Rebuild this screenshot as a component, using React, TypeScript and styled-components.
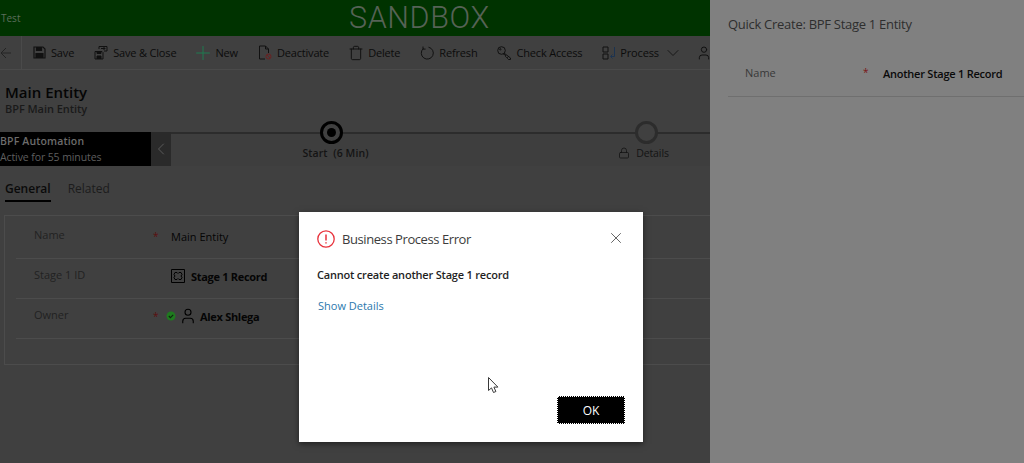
import * as React from "react";
import styled, { createGlobalStyle } from "styled-components";
import { ChevronDown, ChevronLeft, Lock, Plus, Trash, User, X } from "lucide-react";

const GlobalStyle = createGlobalStyle`
  html, body {
    margin: 0;
    height: 100%;
    overflow: hidden;
    background: #404040;
    font-family: "Open Sans", "Noto Sans", "Liberation Sans", sans-serif;
  }
  #root {
    height: 100%;
  }
`;

const commands = [
  { label: "Save", icon: <SaveIcon /> },
  { label: "Save & Close", icon: <SaveCloseIcon /> },
  { label: "New", icon: <Plus size={22} strokeWidth={1.1} color="#1f7a50" /> },
  { label: "Deactivate", icon: <DeactivateIcon /> },
  { label: "Delete", icon: <Trash size={16} strokeWidth={1.5} color="#111" /> },
  { label: "Refresh", icon: <RefreshIcon /> },
  { label: "Check Access", icon: <KeyIcon /> },
];

export default function App() {
  return (
    <Page>
      <GlobalStyle />
      <Main>
        <Banner>
          <AppName>Test</AppName>
          <BannerTitle>SANDBOX</BannerTitle>
        </Banner>
        <Toolbar>
          <BackButton>
            <BackArrow />
          </BackButton>
          <Commands>
            {commands.map(({ label, icon }) => (
              <Command key={label}>
                <IconSlot>{icon}</IconSlot>
                {label}
              </Command>
            ))}
            <ProcessCommand>
              <IconSlot>
                <ProcessIcon />
              </IconSlot>
              Process
              <ChevronDown size={20} strokeWidth={1} color="#111" />
            </ProcessCommand>
            <PersonSlot>
              <User size={16} strokeWidth={1.5} color="#111" />
            </PersonSlot>
          </Commands>
        </Toolbar>
        <RecordHeader>
          <RecordTitle>Main Entity</RecordTitle>
          <RecordType>BPF Main Entity</RecordType>
        </RecordHeader>
        <ProcessBar>
          <ProcessName>
            <strong>BPF Automation</strong>
            <span>Active for 55 minutes</span>
          </ProcessName>
          <Collapse>
            <ChevronLeft size={22} strokeWidth={1.2} color="#5a5a5a" />
          </Collapse>
          <Stages>
            <Track />
            <Stage>
              <ActiveDot />
              <StageLabel $active>Start&nbsp; (6 Min)</StageLabel>
            </Stage>
            <Stage>
              <IdleDot />
              <StageLabel>
                <Lock size={12} strokeWidth={1.5} color="#111" />
                Details
              </StageLabel>
            </Stage>
          </Stages>
        </ProcessBar>
        <Tabs>
          <Tab $active>General</Tab>
          <Tab>Related</Tab>
        </Tabs>
        <Card>
          <FieldRow>
            <FieldLabel>Name</FieldLabel>
            <Star>*</Star>
            <PlainValue>Main Entity</PlainValue>
          </FieldRow>
          <FieldRow>
            <FieldLabel>Stage 1 ID</FieldLabel>
            <Star />
            <LinkValue>
              <EntityIcon />
              Stage 1 Record
            </LinkValue>
          </FieldRow>
          <FieldRow>
            <FieldLabel>Owner</FieldLabel>
            <OwnerStar>*</OwnerStar>
            <OwnerValue>
              <PresenceIcon />
              <User size={18} strokeWidth={1.5} color="#000" />
              Alex Shlega
            </OwnerValue>
          </FieldRow>
        </Card>
      </Main>

      <QuickCreate>
        <PanelTitle>Quick Create: BPF Stage 1 Entity</PanelTitle>
        <PanelField>
          <PanelLabel>Name</PanelLabel>
          <PanelStar>*</PanelStar>
          <PanelValue>Another Stage 1 Record</PanelValue>
        </PanelField>
      </QuickCreate>

      <Dialog role="dialog">
        <DialogHeader>
          <ErrorIcon />
          <DialogTitle>Business Process Error</DialogTitle>
          <CloseButton>
            <X size={18} strokeWidth={1.1} color="#444" />
          </CloseButton>
        </DialogHeader>
        <Message>Cannot create another Stage 1 record</Message>
        <DetailsLink>Show Details</DetailsLink>
        <DialogFooter>
          <OkButton>OK</OkButton>
        </DialogFooter>
      </Dialog>
      <Pointer />
    </Page>
  );
}

const Page = styled.div`
  position: relative;
  display: flex;
  height: 463px;
  width: 1024px;
  overflow: hidden;
`;

const Main = styled.main`
  width: 710px;
  flex: none;
  overflow-x: clip;
  background: #404040;
`;

const Banner = styled.header`
  height: 36px;
  display: flex;
  align-items: center;
  background: #003300;
`;

const AppName = styled.span`
  width: 349px;
  padding-left: 1px;
  box-sizing: border-box;
  font-size: 10px;
  color: #5c6e5c;
`;

const BannerTitle = styled.span`
  font-family: Roboto, "Open Sans", sans-serif;
  font-size: 30.5px;
  font-weight: 300;
  line-height: 36px;
  letter-spacing: 0.6px;
  color: #566256;
`;

const Toolbar = styled.nav`
  height: 34px;
  box-sizing: border-box;
  display: flex;
  align-items: center;
  border-bottom: 1px solid #4a4a4a;
`;

const BackButton = styled.div`
  width: 21px;
  height: 100%;
  flex: none;
  display: flex;
  align-items: center;
  border-right: 1px solid #4a4a4a;
`;

const Commands = styled.div`
  display: flex;
  align-items: center;
  gap: 20px;
  padding-left: 10px;
  white-space: nowrap;
`;

const Command = styled.div`
  display: flex;
  align-items: center;
  gap: 5px;
  font-size: 11px;
  letter-spacing: -0.17px;
  color: #0c0c0c;
`;

const ProcessCommand = styled(Command)`
  gap: 4px;
`;

const IconSlot = styled.span`
  width: 14px;
  height: 16px;
  display: flex;
  align-items: center;
  justify-content: center;

  svg {
    flex: none;
  }
`;

const PersonSlot = styled.span`
  display: flex;
  margin-left: -7px;
`;

const RecordHeader = styled.div`
  height: 62px;
  padding: 12px 0 0 5px;
  box-sizing: border-box;
`;

const RecordTitle = styled.div`
  font-size: 15px;
  font-weight: 600;
  line-height: 20px;
  color: #050505;
`;

const RecordType = styled.div`
  font-size: 11px;
  font-weight: 600;
  line-height: 14px;
  letter-spacing: -0.05px;
  color: #1a1a1a;
`;

const ProcessBar = styled.section`
  height: 34px;
  display: flex;
  background: #3e3e3e;
`;

const ProcessName = styled.div`
  width: 151px;
  flex: none;
  display: flex;
  flex-direction: column;
  justify-content: center;
  font-size: 10.5px;
  line-height: 16px;
  letter-spacing: -0.1px;
  color: #5e5e5e;
  background: #000;

  strong {
    font-weight: 600;
    letter-spacing: 0.15px;
    color: #6c6c6c;
  }
`;

const Collapse = styled.div`
  width: 20px;
  flex: none;
  display: flex;
  align-items: center;
  justify-content: center;
  background: #2a2a2a;
`;

const Stages = styled.div`
  position: relative;
  display: flex;
  flex: 1;
  padding-left: 3px;
`;

const Track = styled.div`
  position: absolute;
  left: 0;
  right: 0;
  top: 0;
  height: 2px;
  background: #2c2c2c;
`;

const Stage = styled.div`
  position: relative;
  width: 315px;
  flex: none;
  display: flex;
  justify-content: center;
  padding-top: 13px;
  box-sizing: border-box;
`;

const ActiveDot = styled.span`
  position: absolute;
  top: -11px;
  left: 146px;
  width: 23px;
  height: 23px;
  box-sizing: border-box;
  border: 3px solid #000;
  border-radius: 50%;
  background: #404040;

  &::after {
    content: "";
    position: absolute;
    inset: 4px;
    border-radius: 50%;
    background: #000;
  }
`;

const IdleDot = styled.span`
  position: absolute;
  top: -11px;
  left: 146px;
  width: 23px;
  height: 23px;
  box-sizing: border-box;
  border: 3px solid #2c2c2c;
  border-radius: 50%;
  background: #404040;
`;

const StageLabel = styled.span<{ $active?: boolean }>`
  display: flex;
  align-items: center;
  gap: 6px;
  height: 15px;
  margin: ${(p) => (p.$active ? "0 0 0 8px" : "0 6px 0 0")};
  font-size: 10.5px;
  font-weight: ${(p) => (p.$active ? 600 : 400)};
  letter-spacing: ${(p) => (p.$active ? "0.1px" : "-0.1px")};
  color: #141414;
`;

const Tabs = styled.div`
  display: flex;
  gap: 17px;
  height: 49px;
  padding: 15px 0 0 5px;
  box-sizing: border-box;
`;

const Tab = styled.div<{ $active?: boolean }>`
  height: 19px;
  font-size: 12px;
  line-height: 16px;
  font-weight: ${(p) => (p.$active ? 600 : 400)};
  color: ${(p) => (p.$active ? "#0a0a0a" : "#1c1c1c")};
  border-bottom: 2px solid ${(p) => (p.$active ? "#000" : "transparent")};
`;

const Card = styled.section`
  margin-left: 4px;
  height: 150px;
  padding: 3px 0 0 11px;
  box-sizing: border-box;
  border: 1px solid #4c4c4c;
  border-right: 0;
`;

const FieldRow = styled.div`
  height: 40px;
  padding-bottom: 5px;
  box-sizing: border-box;
  display: flex;
  align-items: center;
  border-bottom: 1px solid #4c4c4c;
`;

const FieldLabel = styled.span`
  width: 137px;
  padding-left: 18px;
  margin-bottom: 3px;
  flex: none;
  box-sizing: border-box;
  font-size: 11px;
  color: #222;
`;

const Star = styled.span`
  width: 18px;
  flex: none;
  font-size: 10px;
  color: #5c0e0e;
`;

const OwnerStar = styled(Star)`
  width: 13px;
`;

const PlainValue = styled.span`
  font-size: 11px;
  font-weight: 500;
  color: #050505;
`;

const LinkValue = styled.span`
  display: flex;
  align-items: center;
  gap: 6px;
  font-size: 11px;
  font-weight: 700;
  letter-spacing: -0.3px;
  color: #050505;
`;

const OwnerValue = styled(LinkValue)`
  gap: 3px;
`;

const QuickCreate = styled.aside`
  flex: 1;
  padding: 0 0 0 18px;
  background: #808080;
`;

const PanelTitle = styled.h2`
  margin: 0;
  height: 48px;
  font-size: 13px;
  font-weight: 400;
  line-height: 48px;
  letter-spacing: -0.28px;
  color: #2e2e2e;
`;

const PanelField = styled.div`
  height: 48px;
  display: flex;
  align-items: center;
  border-bottom: 1px solid #6f6f6f;
`;

const PanelLabel = styled.span`
  width: 135px;
  padding-left: 17px;
  flex: none;
  box-sizing: border-box;
  font-size: 11px;
  color: #383838;
`;

const PanelStar = styled.span`
  width: 20px;
  flex: none;
  font-size: 10px;
  color: #7a1414;
`;

const PanelValue = styled.span`
  margin-top: 3px;
  font-size: 11px;
  font-weight: 600;
  letter-spacing: -0.24px;
  color: #0a0a0a;
  white-space: nowrap;
`;

const Dialog = styled.div`
  position: absolute;
  left: 299px;
  top: 212px;
  width: 344px;
  height: 230px;
  padding: 0 18px;
  box-sizing: border-box;
  display: flex;
  flex-direction: column;
  background: #fff;
  box-shadow: 0 2px 6px rgba(0, 0, 0, 0.5);
`;

const DialogHeader = styled.div`
  height: 54px;
  display: flex;
  align-items: center;
  gap: 7px;
`;

const DialogTitle = styled.h1`
  flex: 1;
  margin: 0;
  font-size: 13px;
  font-weight: 400;
  letter-spacing: -0.42px;
  color: #3c3c3c;
`;

const CloseButton = styled.span`
  display: flex;
  margin-top: -2px;
`;

const Message = styled.p`
  margin: 0;
  font-size: 11px;
  font-weight: 600;
  line-height: 18px;
  letter-spacing: -0.2px;
  color: #1f1f1f;
`;

const DetailsLink = styled.a`
  margin: 13px 0 0 1px;
  font-size: 11px;
  line-height: 18px;
  color: #2b78ad;
`;

const DialogFooter = styled.div`
  flex: 1;
  display: flex;
  justify-content: flex-end;
  align-items: flex-end;
  padding-bottom: 18px;
`;

const OkButton = styled.button`
  width: 68px;
  height: 28px;
  padding: 0;
  box-sizing: border-box;
  font: 500 12px "Open Sans", "Noto Sans", sans-serif;
  color: #fff;
  background: #000;
  border: 1px dotted #fff;
`;

function BackArrow() {
  return (
    <svg width="11" height="12" viewBox="0 0 11 12" fill="none" stroke="#242424" strokeWidth="1">
      <path d="M6 1 1 6l5 5M1 6h10" />
    </svg>
  );
}

function SaveIcon() {
  return (
    <svg width="13" height="13" viewBox="0 0 13 13" fill="none" stroke="#111" strokeWidth="1.2">
      <path d="M1 1h9l2 2v9H1z" />
      <path d="M3.5 1v3.5h5V1M3 12V7.5h7V12" fill="#111" />
    </svg>
  );
}

function SaveCloseIcon() {
  return (
    <svg width="14" height="15" viewBox="0 0 14 15" fill="none" stroke="#111" strokeWidth="1">
      <path d="M1 6.5h7l1 1v6.5H1z" />
      <path d="M3 14v-3h4v3M3 6.5v2h4v-2" fill="#111" />
      <path d="M5 4V1.5h8V6h-3M7 3.5h4M9.5 2l1.5 1.5L9.5 5" />
    </svg>
  );
}

function DeactivateIcon() {
  return (
    <svg width="14" height="15" viewBox="0 0 14 15" fill="none" stroke="#111" strokeWidth="1">
      <path d="M7 14H1.5V1h6l3 3v4M7.5 1v3h3" />
      <circle cx="10.5" cy="11.5" r="2.5" stroke="#6c2020" />
      <path d="m9 10 3 3" stroke="#6c2020" />
    </svg>
  );
}

function RefreshIcon() {
  return (
    <svg width="14" height="14" viewBox="0 0 14 14" fill="none" stroke="#111" strokeWidth="1">
      <path d="M8.5 1.2a6 6 0 1 1-5.2 1.4" />
      <path d="M3 0.5v2.6h2.6" />
    </svg>
  );
}

function KeyIcon() {
  return (
    <svg width="14" height="14" viewBox="0 0 14 14" fill="none" stroke="#111" strokeWidth="1">
      <circle cx="4.5" cy="4.5" r="3.8" />
      <circle cx="3.3" cy="3.3" r="0.7" />
      <path d="M7.2 7.2 13.5 12v1.5h-2l-1-1v-1h-1l-1-1V9.2L6.2 8" />
    </svg>
  );
}

function ProcessIcon() {
  return (
    <svg width="14" height="14" viewBox="0 0 14 14" fill="none" stroke="#111" strokeWidth="1">
      <path d="M1 1h5v5H1zM1 8h5v5H1z" />
      <path d="M12.5 1v9.5H9M10.5 8.5l-2 2 2 2" stroke="#1c3350" />
    </svg>
  );
}

function EntityIcon() {
  return (
    <svg width="14" height="14" viewBox="0 0 14 14" fill="none" stroke="#000" strokeWidth="1">
      <path d="M.5.5h13v13H.5z" />
      <path d="M4 3.5h2l1 1 1-1h2l1 2-1 1.5 1 1.5-1 2H8l-1-1-1 1H4l-1-2L4 7 3 5.5z" />
    </svg>
  );
}

function PresenceIcon() {
  return (
    <svg width="10" height="10" viewBox="0 0 10 10" fill="none">
      <circle cx="5" cy="5" r="4.5" fill="#1f7a1f" />
      <path d="m2.8 5 1.6 1.6 2.8-2.8" stroke="#0c260c" strokeWidth="1.1" />
    </svg>
  );
}

function ErrorIcon() {
  return (
    <svg width="18" height="18" viewBox="0 0 18 18" fill="none" stroke="#e8323c" strokeWidth="1.3">
      <circle cx="9" cy="9" r="8.2" />
      <path d="M9 4.5v6M9 12.2v1.4" strokeWidth="1.5" />
    </svg>
  );
}

const PointerSvg = styled.svg`
  position: absolute;
  left: 488px;
  top: 377px;
`;

function Pointer() {
  return (
    <PointerSvg width="11" height="17" viewBox="0 0 11 17" fill="#fff" stroke="#3a3a3a" strokeWidth="1">
      <path d="M.5.5v13l3-2.6 2 4.6 2.4-1-2-4.4h4z" />
    </PointerSvg>
  );
}
